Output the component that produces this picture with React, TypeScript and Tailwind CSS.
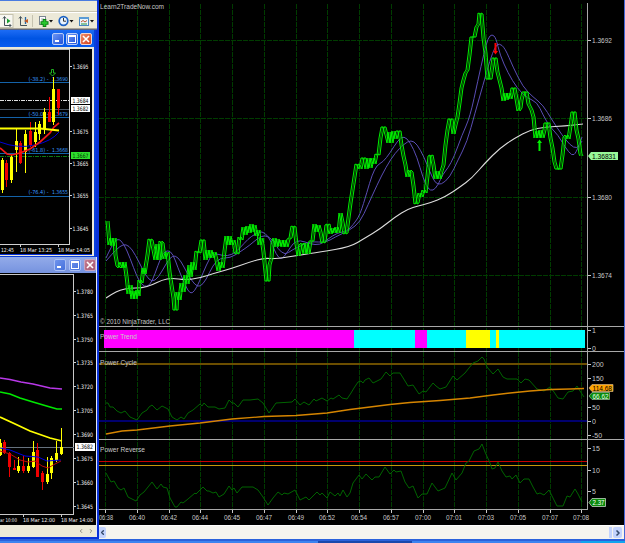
import type { ReactNode } from "react";
import { ChevronLeft, ChevronRight } from "lucide-react";

type Candle = [x: number, top: number, bottom: number, high: number, low: number, up: boolean];

const PRICE =
  "106,221 107,232 108,245 110,238 111,246 113,238 114,255 116,266 118,268 120,262 122,268 123,262 125,276 127,294 129,285 131,299 132,291 134,299 136,290 137,296 138,280 140,283 142,268 143,274 146,255 148,239 150,240 152,250 154,260 156,244 158,260 159,241 161,243 163,259 165,253 166,252 168,272 170,285 172,298 173,310 175,310 176,292 178,300 180,283 182,292 184,275 186,284 188,265 189,277 191,262 193,270 195,251 198,253 200,240 202,240 204,260 206,250 207,258 209,250 211,258 213,252 215,260 217,271 219,262 221,268 223,251 225,236 227,245 228,236 230,245 232,240 234,253 236,254 238,237 240,240 242,227 244,235 246,226 248,233 250,224 251,232 253,225 255,236 257,230 258,245 260,238 262,252 264,272 265,281 267,281 268,265 270,258 271,243 273,238 275,247 276,239 278,246 280,240 281,247 283,240 285,247 287,239 289,238 291,226 293,227 295,244 297,256 299,245 301,243 303,254 305,243 307,254 309,241 311,241 313,224 315,232 317,225 319,232 321,243 323,242 325,225 327,224 329,234 331,228 333,233 335,227 337,233 339,213 341,222 343,234 345,233 347,218 349,203 351,190 353,177 355,164 357,165 359,169 361,158 363,158 365,169 367,158 369,168 371,158 373,164 375,154 377,155 379,138 381,127 383,127 385,135 387,143 388,132 390,143 392,131 394,139 396,131 398,131 400,145 402,156 404,165 406,177 408,170 410,172 412,186 414,204 416,203 418,193 420,197 422,190 424,193 426,176 428,156 430,155 432,165 434,179 436,171 438,179 440,171 442,165 444,145 446,130 448,119 450,119 452,134 454,125 456,117 458,103 460,88 462,80 464,73 466,70 468,55 470,37 473,37 475,27 477,24 478,13 480,14 482,38 484,53 486,79 489,79 491,65 492,58 494,58 496,72 498,80 500,88 502,101 504,93 505,100 507,93 509,99 511,88 513,88 515,99 517,111 519,108 520,100 522,92 525,92 527,104 530,110 532,117 534,138 536,131 537,138 539,130 541,138 543,130 544,123 547,123 549,138 551,148 553,162 555,169 559,169 561,155 563,137 565,135 567,139 569,126 571,112 573,112 575,130 577,139 579,154 580,156";

const FAST =
  "106,258 112,245 118,238 124,244 130,258 137,277 142,285 147,287 152,282 158,265 163,253 168,250 173,254 178,268 183,280 188,291 192,294 197,287 203,273 210,257 215,253 223,256 232,255 240,248 248,239 255,234 262,231 268,236 272,244 276,254 281,260 287,253 293,243 300,240 310,244 320,245 328,239 337,233 347,231 353,225 360,215 367,192 372,175 377,165 383,162 390,153 398,140 404,136 410,142 417,157 423,178 428,189 433,191 438,185 443,174 448,168 454,157 462,135 470,117 478,80 484,53 488,38 492,34 496,38 500,55 508,73 517,88 527,98 537,102 543,115 550,127 558,135 565,147 572,156 576,153 582,137";

const SLOW =
  "106,261 112,254 120,246 126,244 132,249 139,262 146,276 152,282 158,278 166,264 170,258 175,255 181,261 188,275 195,285 200,287 206,280 213,265 220,258 230,258 240,252 250,245 258,238 265,235 272,239 278,249 285,255 292,250 300,246 312,241 325,243 335,237 350,230 360,222 368,205 377,185 386,167 395,153 404,144 411,140 417,144 424,157 430,172 435,183 441,185 450,177 458,160 467,142 475,113 483,85 490,60 495,47 499,43 505,48 513,67 523,87 533,97 543,105 552,120 562,135 570,145 577,149 582,141";

const TREND_LINE =
  "106,298 112,294 120,290 130,288 142,288 152,285 162,280 172,278 185,280 200,278 215,273 230,269 250,262 264,258 275,259 300,255 320,252 350,247 365,238 380,229 395,217 408,209 418,206 430,203 445,197 460,187 472,178 485,163 500,148 515,138 530,130 545,127 565,126 583,124";

const CYCLE =
  "106,403 108,403 110,407 113,407 117,411 121,413 125,411 130,417 137,420 142,413 147,410 149,407 152,405 157,410 162,406 168,409 172,417 177,420 181,417 184,419 188,413 193,410 200,404 202,406 204,403 208,407 215,407 219,409 225,408 229,400 232,403 234,403 238,407 243,400 250,400 258,399 263,403 269,413 276,403 292,402 295,399 300,405 304,402 309,405 314,399 316,401 322,398 327,401 331,398 333,399 339,395 342,398 347,399 351,393 354,388 358,382 361,381 363,383 365,380 369,378 373,383 377,381 381,379 386,372 390,376 393,373 400,373 405,381 408,386 413,385 419,394 423,391 426,392 433,383 436,386 440,389 446,387 453,376 457,380 465,373 473,363 478,361 482,357 484,359 487,367 493,374 498,369 503,377 507,379 517,379 521,383 525,379 529,380 537,389 544,391 550,387 554,392 558,398 563,399 568,392 573,391 577,386 580,391 584,397";

const CYCLE_AVG =
  "106,434 122,431 137,430 170,426 200,423 232,419 264,416.5 296,415.5 327,413 350,409.5 370,407 390,404.5 410,402.5 440,400.5 470,398 493,395 510,393 530,391 550,389.5 570,389 584,388.5";

const REVERSE =
  "106,473 111,482 114,481 118,488 121,490 124,488 128,497 136,501 140,495 144,492 152,482 157,489 161,484 163,487 167,488 170,498 175,507 177,507 181,502 183,503 188,499 195,493 196,494 203,487 207,491 209,491 213,493 216,492 219,497 224,494 229,486 232,490 234,488 237,493 242,487 253,487 258,490 263,497 268,505 273,498 278,492 282,495 284,493 288,494 295,490 300,500 306,497 309,500 317,492 320,495 322,493 327,498 330,492 335,496 338,493 340,496 343,490 347,497 350,493 353,483 359,475 362,479 366,474 372,480 375,477 379,477 385,467 390,474 394,470 396,472 401,471 405,482 409,488 413,486 418,498 422,494 427,494 432,483 438,491 445,488 452,473 456,480 462,473 466,463 469,461 474,451 479,449 482,444 485,452 490,463 492,469 495,468 498,462 502,471 506,477 510,476 512,479 516,475 520,483 524,479 529,479 533,487 537,494 540,493 544,495 549,490 553,498 557,506 563,506 567,496 570,497 575,489 578,494 582,502";

const TIMES: [number, string][] = [
  [105, "06:38"], [137, "06:40"], [169, "06:42"], [200, "06:44"], [232, "06:45"], [264, "06:47"],
  [296, "06:49"], [327, "06:52"], [359, "06:54"], [391, "06:57"], [423, "07:00"], [454, "07:01"],
  [486, "07:03"], [518, "07:05"], [550, "07:07"], [581, "07:08"],
];

const TREND_BARS: [number, number, string][] = [
  [104, 250, "#ff00ff"],
  [354, 61, "#00ffff"],
  [415, 12, "#ff00ff"],
  [427, 39, "#00ffff"],
  [466, 24, "#ffff00"],
  [490, 6, "#00ffff"],
  [496, 3, "#ffff00"],
  [499, 86, "#00ffff"],
];

const AXIS: [number, string][] = [
  [40, "1.3692"], [118, "1.3686"], [197, "1.3680"], [275, "1.3674"],
  [330, "1"], [348, "0"],
  [364, "200"], [378, "150"], [407, "50"], [421, "0"], [435, "-50"],
  [448, "15"], [470, "10"], [491, "5"],
];

const CANDLES_TOP: Candle[] = [
  [1, 160, 190, 158, 193, true],
  [5, 163, 180, 160, 187, false],
  [10, 157, 180, 155, 183, true],
  [15, 141, 150, 128, 172, true],
  [19, 143, 163, 141, 164, false],
  [24, 134, 152, 130, 173, true],
  [29, 131, 145, 122, 147, false],
  [34, 132, 142, 122, 147, true],
  [38, 124, 134, 121, 140, true],
  [43, 112, 129, 108, 134, true],
  [48, 112, 122, 97, 122, false],
  [52, 89, 122, 77, 125, true],
  [57, 89, 108, 89, 115, false],
];

const CANDLES_BOTTOM: Candle[] = [
  [-1, 443, 455, 439, 456, true],
  [3, 442, 453, 440, 454, false],
  [8, 453, 467, 452, 477, false],
  [13, 468, 470, 460, 470, false],
  [17, 466, 471, 457, 473, true],
  [22, 466, 471, 456, 473, false],
  [27, 466, 471, 458, 473, true],
  [32, 452, 467, 441, 468, true],
  [36, 450, 477, 443, 477, false],
  [41, 473, 482, 471, 490, false],
  [46, 474, 482, 457, 484, true],
  [50, 458, 473, 456, 479, true],
  [55, 453, 460, 441, 462, true],
  [60, 447, 454, 428, 455, true],
];

// rounds a point list into a quadratic path
function smooth(points: string) {
  const p = points.split(" ").map((s) => s.split(",").map(Number));
  let d = `M${p[0][0]} ${p[0][1]}`;
  for (let i = 1; i < p.length - 1; i++) {
    const mx = (p[i][0] + p[i + 1][0]) / 2;
    const my = (p[i][1] + p[i + 1][1]) / 2;
    d += ` Q${p[i][0]} ${p[i][1]} ${mx} ${my}`;
  }
  const last = p[p.length - 1];
  return `${d} L${last[0]} ${last[1]}`;
}

function Candles({ data }: { data: Candle[] }) {
  return (
    <g shapeRendering="crispEdges">
      {data.map(([x, top, bottom, high, low, up]) => (
        <g key={x} fill={up ? "#ffff00" : "#f00000"}>
          <rect x={x + 1} y={high} width="1" height={low - high} />
          <rect x={x} y={top} width="3" height={bottom - top} />
        </g>
      ))}
    </g>
  );
}

function WindowButtons({ active }: { active?: boolean }) {
  const blue = active
    ? "border-[#b9ccf7] bg-linear-to-br from-[#6d96f5] to-[#2250d8]"
    : "border-[#a9bff5] bg-linear-to-br from-[#6f93ec] to-[#4671dc]";
  const red = active
    ? "border-[#f3d5cd] bg-linear-to-br from-[#f08a66] to-[#d2401a]"
    : "border-[#c9a5c0] bg-linear-to-br from-[#c47a8e] to-[#a85a74]";
  return (
    <div className={active ? "flex gap-[2px]" : "flex gap-[3px]"}>
      <div className={`flex h-3 w-3 items-end rounded-xs border p-[2px] ${blue}`}>
        <div className="h-[2px] w-1 bg-white" />
      </div>
      <div className={`h-3 w-3 rounded-xs border p-px ${blue}`}>
        <div className="h-full w-full border border-t-2 border-white" />
      </div>
      <div className={`h-3 w-3 rounded-xs border ${red}`}>
        <svg viewBox="0 0 10 10" className="h-full w-full">
          <path d="M2 2L8 8M8 2L2 8" stroke="#fff" strokeWidth="1.6" />
        </svg>
      </div>
    </div>
  );
}

function Toolbar() {
  return (
    <div className="h-[30px] w-[97px] border-t border-[#4a7be0] bg-[#ece9d8]">
      <div className="h-[11px] border-b border-[#c9c5b2]" />
      <svg viewBox="0 12 97 18" className="h-[18px] w-[97px]">
        <rect x="0" y="12" width="97" height="1" fill="#fff" />
        <rect x="-1" y="14.5" width="14" height="13" fill="#f8f7f1" stroke="#c5c2b0" />
        <g fill="none" stroke="#46525a" strokeWidth="1">
          <path d="M4.500 17V25.500H11M3 18.500L4.500 16.500L6 18.500M9.500 24L11 25.500L9.500 27" />
          <path d="M20.500 17V25.500H27M19 18.500L20.500 16.500L22 18.500" />
        </g>
        <path d="M7 18.500L10.500 21L7 23.500Z" fill="#18a030" />
        <path d="M25.500 17V24" stroke="#2567a8" strokeWidth="1.300" />
        <path d="M28 19L24 21L28 23Z" fill="#c85a24" />
        <rect x="32" y="15" width="1" height="12" fill="#c5c2b0" />
        <rect x="39.500" y="16.500" width="6" height="8" fill="#fff" stroke="#7a8590" />
        <path d="M41 19H44M41 21H44" stroke="#8a98a0" strokeWidth=".8" />
        <path d="M44.500 19V27M40.500 23H48.500" stroke="#0b7d10" strokeWidth="3.600" />
        <path d="M44.500 20V26M41.500 23H47.500" stroke="#27c52c" strokeWidth="2" />
        <path d="M49 20H53L51 22.500ZM69.500 20H73.500L71.500 22.500ZM90 20H94L92 22.500Z" fill="#111" />
        <circle cx="63.500" cy="21" r="4.300" fill="#e8f4ff" stroke="#1c62c4" strokeWidth="1.700" />
        <path d="M63.500 18V21.200H66" fill="none" stroke="#333" />
        <rect x="79.500" y="17.500" width="9" height="8" fill="#eaf4fb" stroke="#4886bf" />
        <rect x="79" y="17" width="10" height="2" fill="#5b9cd6" />
        <path d="M81 22L83 20.500L85 22L87 20.500" fill="none" stroke="#c0552c" />
        <path d="M81 24H87" stroke="#27953a" />
        <rect x="0" y="28" width="97" height="1" fill="#a9a698" />
        <rect x="0" y="29" width="97" height="1" fill="#5b6685" />
      </svg>
    </div>
  );
}

type LabelProps = { x: number; y: number; w: number; fill?: string; size?: number; children: ReactNode };

function Label({ x, y, w, fill = "#f4f4f4", size, children }: LabelProps) {
  return (
    <text x={x} y={y} textLength={w} lengthAdjust="spacingAndGlyphs" fill={fill} fontSize={size}>
      {children}
    </text>
  );
}

function TopChart() {
  const levels: [number, number, string, string][] = [
    [82, 81, "(-38.2) -", "1.3690"],
    [117, 116, "(-50.0) -", "1.3679"],
    [153, 152, "(-61.8) -", "1.3668"],
    [196, 194, "(-76.4) -", "1.3655"],
  ];
  const ticks: [number, string][] = [
    [66, "1.3695"], [131, "1.3675"], [163, "1.3665"], [195, "1.3655"], [228, "1.3645"],
  ];
  return (
    <svg
      viewBox="0 49 92 205"
      fontSize="6"
      className="h-[205px] w-[92px] bg-black [font-family:'DejaVu_Sans_Condensed','DejaVu_Sans',sans-serif]"
    >
      <g shapeRendering="crispEdges">
        {levels.map(([y]) => (
          <rect key={y} x="0" y={y} width="69" height="1" fill="#1462a8" />
        ))}
        <rect x="0" y="109" width="69" height="1" fill="#4b5663" />
        <path d="M0 100.500H69" stroke="#e0e0e0" strokeDasharray="4 1 1 1" />
        <path d="M0 156.500H69" stroke="#0c7a14" strokeDasharray="4 1 1 1" />
        <rect x="0" y="49" width="70" height="1" fill="#b8b8b8" />
        <rect x="69" y="49" width="1" height="196" fill="#d0d0d0" />
        <rect x="0" y="244" width="70" height="1" fill="#d0d0d0" />
        <rect x="20" y="245" width="1" height="2" fill="#d0d0d0" />
        <rect x="58" y="245" width="1" height="2" fill="#d0d0d0" />
      </g>
      {levels.map(([y, base, level, price]) => (
        <g key={y}>
          <Label x={28.500} y={base} w={20} size={5.500} fill="#3a9cff">
            {level}
          </Label>
          <Label x={52} y={base} w={16} size={5.500} fill="#3a9cff">
            {price}
          </Label>
        </g>
      ))}
      <Candles data={CANDLES_TOP} />
      <path d="M0 142Q18 149 35 145T59 132" fill="none" stroke="#0000d8" />
      <path d="M0 148L7 154L12 155L20 153L30 149L40 142L50 133L54 127L59 123" fill="none" stroke="#f01818" strokeWidth="1.700" />
      <path d="M0 128.500H40L59 130.500" fill="none" stroke="#ffff00" strokeWidth="1.800" />
      <path d="M51.500 69.500H53.500V73H55.500L52.500 76L49.500 73H51.500Z" fill="none" stroke="#22c022" strokeWidth=".9" />
      {ticks.map(([y, text]) => (
        <g key={text}>
          <rect x="70" y={y} width="2" height="1" fill="#d0d0d0" />
          <Label x={72.500} y={y + 2.500} w={16}>
            {text}
          </Label>
        </g>
      ))}
      <rect x="71" y="97" width="19" height="7" fill="#fff" />
      <Label x={72.500} y={102.800} w={16} fill="#000">1.3684</Label>
      <rect x="71" y="105" width="19" height="7" fill="#fff" />
      <Label x={72.500} y={110.800} w={16} fill="#000">1.3682</Label>
      <rect x="71" y="152" width="19" height="7" fill="#2ee02e" />
      <Label x={72.500} y={157.800} w={16} fill="#003000">1.3667</Label>
      <Label x={1} y={252} w={13} size={5.500}>12:45</Label>
      <Label x={20} y={252} w={32} size={5.500}>18 Mar 13:25</Label>
      <Label x={58} y={252} w={32} size={5.500}>18 Mar 14:05</Label>
    </svg>
  );
}

function BottomChart() {
  const ticks: [number, string][] = [
    [291, "1.3780"], [315, "1.3765"], [339, "1.3750"], [362, "1.3735"], [386, "1.3720"],
    [410, "1.3705"], [434, "1.3690"], [458, "1.3675"], [482, "1.3660"], [506, "1.3645"],
  ];
  return (
    <svg
      viewBox="0 273 96 252"
      fontSize="6"
      className="h-[252px] w-24 bg-black [font-family:'DejaVu_Sans_Condensed','DejaVu_Sans',sans-serif]"
    >
      <g shapeRendering="crispEdges" fill="#c8c8c8">
        <rect x="0" y="274" width="74" height="1" />
        <rect x="73" y="274" width="1" height="241" />
        <rect x="0" y="514" width="74" height="1" />
        <rect x="23" y="515" width="1" height="2" />
        <rect x="61" y="515" width="1" height="2" />
        <rect x="0" y="447" width="74" height="1" fill="#66727e" />
      </g>
      <Candles data={CANDLES_BOTTOM} />
      <g fill="none">
        <path d="M0 378L10 379.500L21 382L33 384L50 388L62 389" stroke="#b838e8" strokeWidth="1.400" />
        <path d="M0 392L10 394L20 398L33 402L50 407L57 409H62" stroke="#00e800" strokeWidth="1.600" />
        <path d="M0 417L13 423L30 431L50 438L62 441" stroke="#ffff00" strokeWidth="1.800" />
        <path d="M0 448L10 450L25 456L38 457L47 461L61 460" stroke="#0000e0" />
        <path d="M0 451L10 454L20 460L28 462L35 461L42 466L48 468L55 464L61 461" stroke="#c00808" />
      </g>
      {ticks.map(([y, text]) => (
        <g key={text}>
          <rect x="74" y={y} width="2" height="1" fill="#d0d0d0" />
          <Label x={76.500} y={y + 2.500} w={16.500}>
            {text}
          </Label>
        </g>
      ))}
      <rect x="75" y="443" width="20" height="8" fill="#fff" />
      <Label x={76.500} y={449.300} w={16.500} fill="#000">1.3682</Label>
      <Label x={0} y={522} w={17} size={5}>ar 10:00</Label>
      <Label x={23} y={522} w={32} size={5.500}>18 Mar 12:00</Label>
      <Label x={61} y={522} w={32} size={5.500}>18 Mar 14:00</Label>
    </svg>
  );
}

function MainChart() {
  return (
    <svg viewBox="99 0 525 525" className="h-[525px] w-[525px] bg-black text-[7px] [font-family:'Liberation_Sans',Arial,sans-serif]">
      <g shapeRendering="crispEdges" stroke="#003c00">
        {TIMES.map(([x]) => (
          <path key={x} d={`M${x + 0.5} 4V509`} strokeDasharray="5 1" />
        ))}
        {[40, 118, 197, 275].map((y) => (
          <path key={y} d={`M99 ${y + 0.5}H587`} strokeDasharray="5 1" />
        ))}
      </g>

      <g fill="none">
        <path d={smooth(FAST)} stroke="#5a4db4" />
        <path d={smooth(SLOW)} stroke="#5a4db4" />
        <path d={smooth(TREND_LINE)} stroke="#dcdcdc" strokeWidth="1.100" />
        <g strokeLinejoin="round">
          <polyline points={PRICE} stroke="#007d00" strokeWidth="1" transform="translate(1.500 0)" />
          <polyline points={PRICE} stroke="#00f000" strokeWidth="1" />
          <polyline points={PRICE} stroke="#00f000" strokeWidth="1" transform="translate(3 0)" />
        </g>
      </g>
      <path d="M494.500 43V51H493L495.500 54.500L498 51H496.500V43Z" fill="#f00" />
      <path d="M538.500 151V143H537L539.500 139.500L542 143H540.500V151Z" fill="#0e0" />

      <g shapeRendering="crispEdges">
        {TREND_BARS.map(([x, w, color]) => (
          <rect key={x} x={x} y="330" width={w} height="18" fill={color} />
        ))}
        <rect x="99" y="363" width="489" height="2" fill="#6b4e00" />
        <rect x="99" y="420" width="489" height="2" fill="#00006e" />
        <rect x="99" y="461" width="489" height="1" fill="#c80000" />
        <rect x="99" y="465" width="489" height="1" fill="#c8960a" />
        <g fill="#a8a8a8">
          <rect x="99" y="326" width="525" height="1" />
          <rect x="99" y="351" width="525" height="1" />
          <rect x="99" y="439" width="525" height="1" />
          <rect x="99" y="509" width="489" height="1" />
          <rect x="587" y="3" width="1" height="507" />
        </g>
      </g>
      <polyline points={CYCLE} fill="none" stroke="#006400" />
      <polyline points={CYCLE_AVG} fill="none" stroke="#d68500" strokeWidth="1.300" />
      <polyline points={REVERSE} fill="none" stroke="#006400" />

      {AXIS.map(([y, text]) => (
        <g key={y} fill="#c8c8c8">
          <rect x="588" y={y} width="3" height="1" />
          <text x="592" y={y + 2.800} textLength={text.length === 6 ? 20 : undefined} lengthAdjust="spacingAndGlyphs">
            {text}
          </text>
        </g>
      ))}
      {TIMES.map(([x, text], i) => (
        <g key={x} fill="#c8c8c8">
          <rect x={x} y="510" width="1" height="3" />
          <text
            x={i === 0 ? 99 : x - 8}
            y="519.500"
            textLength={i === 0 ? 14 : 16}
            lengthAdjust="spacingAndGlyphs"
          >
            {text}
          </text>
        </g>
      ))}

      <path d="M588 156L591 152H618V160H591Z" fill="#98f898" />
      <Label x={592} y={158.800} w={24} fill="#000">1.36831</Label>
      <path d="M589 396L592 392.500H609.500V399.500H592Z" fill="#0a8a0a" stroke="#a0c0a0" strokeWidth=".7" />
      <Label x={592.500} y={398.600} w={16} fill="#e8ffe8">66.62</Label>
      <path d="M589 388L592 384.500H613V391.500H592Z" fill="#ffa500" stroke="#d0b080" strokeWidth=".7" />
      <Label x={592.500} y={390.600} w={19.500} fill="#000">114.68</Label>
      <path d="M589 502.500L592 498.500H605.500V506.500H592Z" fill="#0a8a0a" stroke="#c0d0c0" strokeWidth=".8" />
      <Label x={592.500} y={505} w={12} fill="#fff">2.37</Label>

      <Label x={100} y={9} w={64} fill="#c8c8c8">Learn2TradeNow.com</Label>
      <Label x={100} y={323.500} w={70} fill="#c8c8c8">© 2010 NinjaTrader, LLC</Label>
      <Label x={100} y={339} w={37} fill="#c8c8c8">Power Trend</Label>
      <Label x={100} y={364.500} w={37} fill="#c8c8c8">Power Cycle</Label>
      <Label x={100} y={452} w={45} fill="#c8c8c8">Power Reverse</Label>
    </svg>
  );
}

export default function App() {
  return (
    <main className="flex h-[543px] w-[625px] flex-col overflow-hidden bg-[#0831d9]">
      <div className="flex h-[539px]">
        <div className="flex w-[99px] shrink-0 flex-col">
          <Toolbar />
          <section className="h-[227px] w-24 border-r-2 border-b border-[#0a3fd8]">
            <div className="flex h-[17px] items-center justify-end bg-linear-to-b from-[#1c6cf5] via-[#0054e3] to-[#0a5df0] pt-px pr-[2px]">
              <WindowButtons active />
            </div>
            <div className="h-[209px] border-t-2 border-r-2 border-b border-[#ece9d8]">
              <TopChart />
            </div>
          </section>
          <section className="h-[280px] w-[97px] border-r border-[#e4e8f5]">
            <div className="flex h-4 items-center justify-end bg-linear-to-b from-[#93abe9] to-[#7693df]">
              <WindowButtons />
            </div>
            <BottomChart />
            <div className="flex h-3 items-center justify-end gap-1 bg-[#ece9d8] pr-[2px] text-[#8c8a80]">
              <ChevronLeft size={6} strokeWidth={4} />
              <ChevronRight size={6} strokeWidth={4} />
            </div>
          </section>
        </div>
        <section className="flex w-[526px] flex-col border-r border-[#4668d8]">
          <MainChart />
          <div className="flex h-[14px] items-center justify-between border-t border-white bg-[#f5f4ef]">
            <div className="flex h-[11px] w-[7px] items-center justify-center rounded-r-xs bg-[#c3d3fd] text-[#33496b]">
              <ChevronLeft size={7} strokeWidth={5} />
            </div>
            <div className="flex items-center gap-px pr-[2px]">
              <div className="h-[11px] w-[3px] bg-[#c3d3fd]" />
              <div className="flex h-[11px] w-[9px] items-center justify-center rounded-xs bg-[#c3d3fd] text-[#33496b]">
                <ChevronRight size={8} strokeWidth={5} />
              </div>
            </div>
          </div>
        </section>
      </div>
      <footer className="flex h-1 border-t-2 border-[#2a62dc] bg-[#3c84f0]">
        <div className="w-[318px]" />
        <div className="w-[94px] bg-[#1a48ac]" />
        <div className="w-[169px]" />
        <div className="flex-1 bg-[#12a5ee]" />
      </footer>
    </main>
  );
}
